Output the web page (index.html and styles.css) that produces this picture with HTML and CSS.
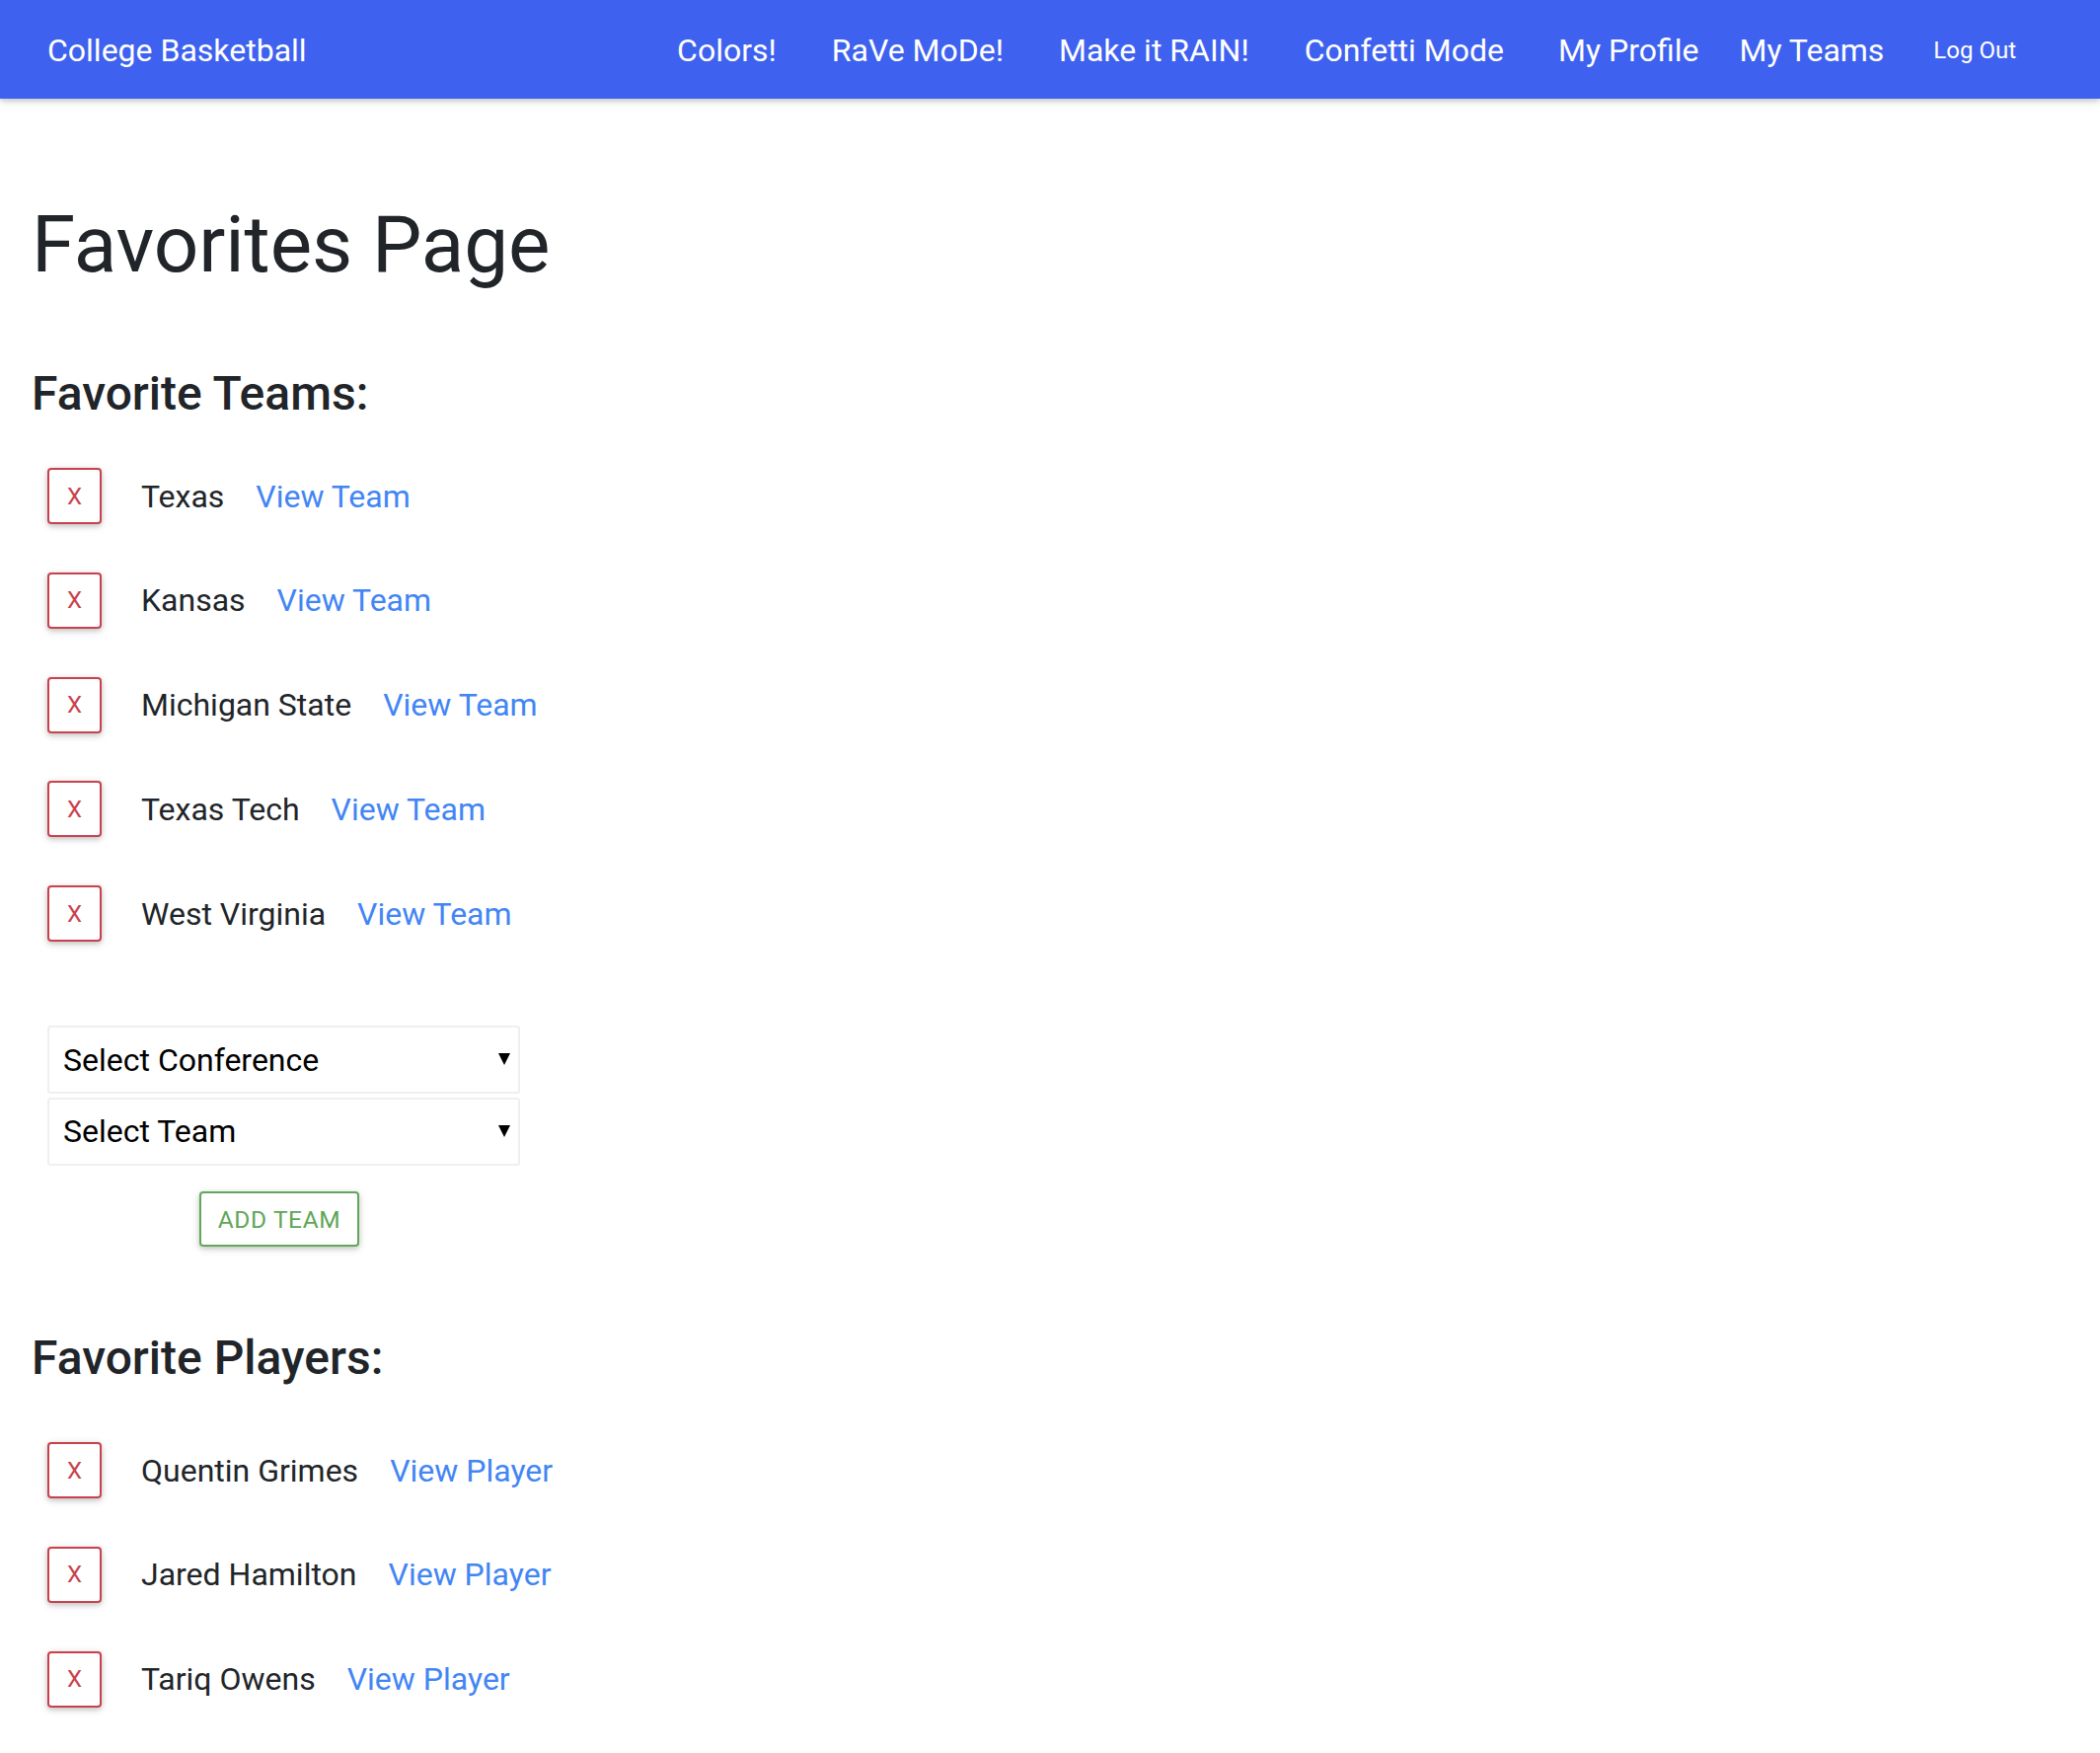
FILE: index.html
```html
<!DOCTYPE html>
<html lang="en">
<head>
<meta charset="utf-8">
<title>Favorites Page</title>
<link rel="stylesheet" href="styles.css">
</head>
<body>
<nav class="navbar">
  <a class="brand" href="#">College Basketball</a>
  <div class="nav-right">
    <ul class="modes">
      <li><a class="nav-link" href="#">Colors!</a></li>
      <li><a class="nav-link" href="#">RaVe MoDe!</a></li>
      <li><a class="nav-link" href="#">Make it RAIN!</a></li>
      <li><a class="nav-link" href="#">Confetti Mode</a></li>
    </ul>
    <ul class="account">
      <li><a class="nav-link" href="#">My Profile</a></li>
      <li><a class="nav-link" href="#">My Teams</a></li>
      <li><a class="nav-link logout" href="#">Log Out</a></li>
    </ul>
  </div>
</nav>

<main class="page">
  <h1 class="page-title">Favorites Page</h1>

  <section class="favorites teams">
    <h2 class="section-title">Favorite Teams:</h2>
    <ul class="fav-list">
      <li class="fav-row"><button class="btn-remove">x</button><span class="fav-name">Texas</span><a class="fav-link" href="#">View Team</a></li>
      <li class="fav-row"><button class="btn-remove">x</button><span class="fav-name">Kansas</span><a class="fav-link" href="#">View Team</a></li>
      <li class="fav-row"><button class="btn-remove">x</button><span class="fav-name">Michigan State</span><a class="fav-link" href="#">View Team</a></li>
      <li class="fav-row"><button class="btn-remove">x</button><span class="fav-name">Texas Tech</span><a class="fav-link" href="#">View Team</a></li>
      <li class="fav-row"><button class="btn-remove">x</button><span class="fav-name">West Virginia</span><a class="fav-link" href="#">View Team</a></li>
    </ul>

    <form class="add-form">
      <div class="select-wrap">
        <select class="select">
          <option>Select Conference</option>
        </select>
      </div>
      <div class="select-wrap">
        <select class="select">
          <option>Select Team</option>
        </select>
      </div>
      <button type="button" class="btn-add">Add Team</button>
    </form>
  </section>

  <section class="favorites players">
    <h2 class="section-title">Favorite Players:</h2>
    <ul class="fav-list">
      <li class="fav-row"><button class="btn-remove">x</button><span class="fav-name">Quentin Grimes</span><a class="fav-link" href="#">View Player</a></li>
      <li class="fav-row"><button class="btn-remove">x</button><span class="fav-name">Jared Hamilton</span><a class="fav-link" href="#">View Player</a></li>
      <li class="fav-row"><button class="btn-remove">x</button><span class="fav-name">Tariq Owens</span><a class="fav-link" href="#">View Player</a></li>
      <li class="fav-row"><button class="btn-remove" aria-label="remove"></button></li>
    </ul>
  </section>
</main>
</body>
</html>
```

FILE: styles.css
```css
* {
  box-sizing: border-box;
}

html, body {
  margin: 0;
  padding: 0;
  background: #ffffff;
}

body {
  font-family: Roboto, "Noto Sans", "Liberation Sans", sans-serif;
  color: #212529;
  font-size: 32px;
}

a {
  text-decoration: none;
}

ul {
  list-style: none;
  margin: 0;
  padding: 0;
}

/* ---------- navbar ---------- */
.navbar {
  height: 100px;
  background: #3e62ef;
  display: flex;
  align-items: center;
  padding: 0 85px 0 48px;
  box-shadow: 0 2px 5px rgba(0, 0, 0, 0.16), 0 2px 10px rgba(0, 0, 0, 0.12);
  position: relative;
  z-index: 2;
}

.brand {
  color: #ffffff;
  font-size: 32px;
  line-height: 1;
  margin-top: 2px;
}

.nav-right {
  margin-left: auto;
  display: flex;
  align-items: center;
  margin-top: 2px;
}

.modes {
  display: flex;
  align-items: center;
  gap: 56px;
}

.account {
  display: flex;
  align-items: center;
  gap: 41px;
  margin-left: 55px;
}

.nav-link {
  color: #ffffff;
  font-size: 32px;
  line-height: 1;
  display: block;
}

.nav-link.logout {
  font-size: 24px;
  margin-left: 9px;
  margin-bottom: 1px;
}

/* ---------- page ---------- */
.page {
  padding: 100px 32px 0;
}

.page-title {
  margin: 0;
  font-size: 80px;
  line-height: 96px;
  font-weight: 400;
  letter-spacing: -0.1px;
}

.section-title {
  margin: 0;
  font-size: 48px;
  line-height: 56px;
  font-weight: 500;
}

.teams .section-title {
  margin-top: 75px;
}

.players .section-title {
  margin-top: 85px;
}

.fav-list {
  display: flex;
  flex-direction: column;
  gap: 48.8px;
  padding-left: 16px;
}

.teams .fav-list {
  margin-top: 47px;
}

.players .fav-list {
  margin-top: 57px;
}

.fav-row {
  display: flex;
  align-items: center;
  height: 57px;
}

.btn-remove {
  width: 55px;
  height: 57px;
  border: 2px solid #c8414c;
  border-radius: 4px;
  background: #ffffff;
  color: #c8414c;
  font-family: Roboto, "Liberation Sans", sans-serif;
  font-size: 24px;
  text-transform: uppercase;
  padding: 0;
  box-shadow: 0 2px 5px rgba(0, 0, 0, 0.16), 0 2px 10px rgba(0, 0, 0, 0.12);
  flex: none;
}

.fav-name {
  margin-left: 40px;
  color: #212529;
}

.fav-link {
  margin-left: 32px;
  color: #4285f4;
}

/* ---------- add form ---------- */
.add-form {
  margin: 85px 0 0 16px;
  width: 479px;
  display: flex;
  flex-direction: column;
}

.select-wrap {
  position: relative;
  height: 69px;
  margin-bottom: 3.5px;
}

.select-wrap::after {
  content: "";
  position: absolute;
  right: 10px;
  top: 28px;
  border-left: 6px solid transparent;
  border-right: 6px solid transparent;
  border-top: 12px solid #000000;
  pointer-events: none;
}

.select {
  -webkit-appearance: none;
  appearance: none;
  width: 100%;
  height: 100%;
  border: 2px solid #efefef;
  border-radius: 3px;
  background: #ffffff;
  color: #000000;
  font-family: Roboto, "Liberation Sans", sans-serif;
  font-size: 32px;
  padding: 0 40px 0 14px;
  outline: none;
}

.btn-add {
  margin: 23px 0 0 154px;
  width: 162px;
  height: 56px;
  border: 2px solid #62a85a;
  border-radius: 4px;
  background: #ffffff;
  color: #5fa657;
  font-family: Roboto, "Liberation Sans", sans-serif;
  font-size: 24.5px;
  letter-spacing: 0.6px;
  text-transform: uppercase;
  padding: 0;
  box-shadow: 0 2px 5px rgba(0, 0, 0, 0.16), 0 2px 10px rgba(0, 0, 0, 0.12);
}
```
